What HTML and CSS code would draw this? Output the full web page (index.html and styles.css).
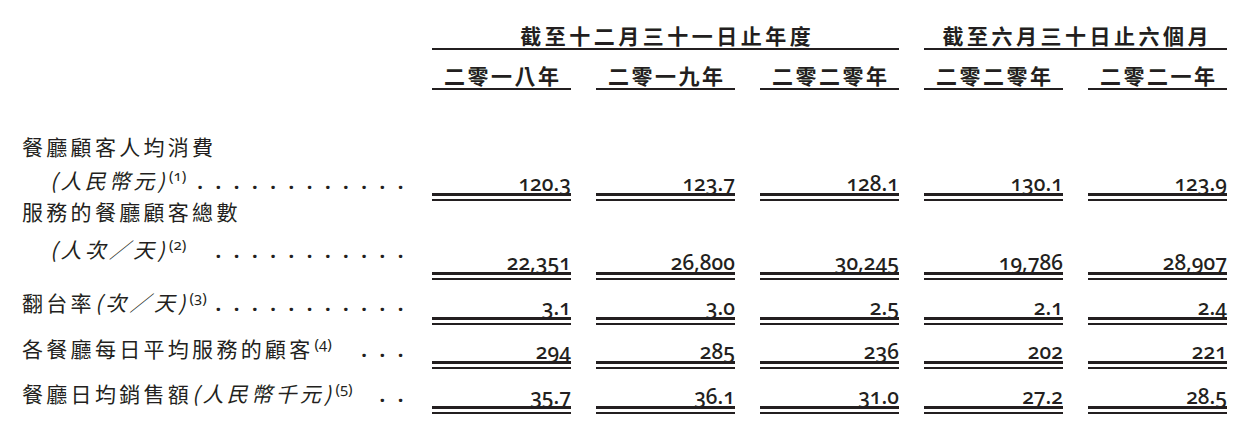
FILE: index.html
```html
<!DOCTYPE html>
<html lang="zh-Hant">
<head>
<meta charset="utf-8">
<title>營運數據</title>
<link rel="stylesheet" href="styles.css">
</head>
<body>
<div class="table">
  <div class="corner"></div>
  <div class="group g1">截至十二月三十一日止年度</div>
  <div class="group g2">截至六月三十日止六個月</div>

  <div class="corner"></div>
  <div class="year">二零一八年</div>
  <div class="year">二零一九年</div>
  <div class="year">二零二零年</div>
  <div class="year">二零二零年</div>
  <div class="year">二零二一年</div>

  <div class="label r1">
    <div class="line">餐廳顧客人均消費</div>
    <div class="line lead"><span class="sub indent"><i>(人民幣元)</i><sup>(1)</sup></span><span class="dots">............</span></div>
  </div>
  <div class="num"><span>120.3</span></div>
  <div class="num"><span>123.7</span></div>
  <div class="num"><span>128.1</span></div>
  <div class="num"><span>130.1</span></div>
  <div class="num"><span>123.9</span></div>

  <div class="label r2">
    <div class="line">服務的餐廳顧客總數</div>
    <div class="line lead"><span class="sub indent"><i>(人次／天)</i><sup>(2)</sup></span><span class="dots">...........</span></div>
  </div>
  <div class="num"><span>22,351</span></div>
  <div class="num"><span>26,800</span></div>
  <div class="num"><span>30,245</span></div>
  <div class="num"><span>19,786</span></div>
  <div class="num"><span>28,907</span></div>

  <div class="label r3">
    <div class="line lead"><span class="sub">翻台率<i>(次／天)</i><sup>(3)</sup></span><span class="dots">...........</span></div>
  </div>
  <div class="num"><span>3.1</span></div>
  <div class="num"><span>3.0</span></div>
  <div class="num"><span>2.5</span></div>
  <div class="num"><span>2.1</span></div>
  <div class="num"><span>2.4</span></div>

  <div class="label r4">
    <div class="line lead"><span class="sub">各餐廳每日平均服務的顧客<sup>(4)</sup></span><span class="dots">...</span></div>
  </div>
  <div class="num"><span>294</span></div>
  <div class="num"><span>285</span></div>
  <div class="num"><span>236</span></div>
  <div class="num"><span>202</span></div>
  <div class="num"><span>221</span></div>

  <div class="label r5">
    <div class="line lead"><span class="sub">餐廳日均銷售額<i>(人民幣千元)</i><sup>(5)</sup></span><span class="dots">..</span></div>
  </div>
  <div class="num"><span>35.7</span></div>
  <div class="num"><span>36.1</span></div>
  <div class="num"><span>31.0</span></div>
  <div class="num"><span>27.2</span></div>
  <div class="num"><span>28.5</span></div>
</div>
</body>
</html>
```

FILE: styles.css
```css
html, body {
  margin: 0;
  padding: 0;
  background: #ffffff;
}

body {
  color: #231f20;
  font-family: "Noto Sans CJK TC", "Noto Sans", sans-serif;
  width: 1248px;
  height: 432px;
  overflow: hidden;
}

.table {
  display: grid;
  grid-template-columns: 407px repeat(5, 139px);
  grid-template-rows: 50px 40px 111px 79px 45px 44px 45px;
  column-gap: 25px;
}

.group {
  align-self: end;
  font-size: 21px;
  font-weight: 700;
  line-height: 24px;
  letter-spacing: 3.5px;
  padding-left: 3.5px;
  text-align: center;
  padding-bottom: 1px;
  border-bottom: 2px solid #231f20;
}

.g1 { grid-column: 2 / span 3; }
.g2 { grid-column: 5 / span 2; }

.year {
  align-self: end;
  font-size: 21px;
  font-weight: 700;
  line-height: 24px;
  letter-spacing: 2.5px;
  padding-left: 2.5px;
  text-align: center;
  padding-bottom: 1px;
  border-bottom: 2px solid #231f20;
}

.label {
  align-self: end;
  font-size: 21px;
  line-height: 35px;
  letter-spacing: 3.3px;
  padding-left: 22px;
  padding-bottom: 2px;
}

.label.r1 .line:first-child { margin-bottom: -1px; }
.label.r2 { padding-bottom: 12px; }
.label.r2 .line:first-child { margin-bottom: 3px; }
.label.r3 { padding-bottom: 4px; }

.lead {
  display: flex;
  justify-content: space-between;
  align-items: baseline;
  white-space: nowrap;
}

.indent { padding-left: 28px; }

.sub i {
  font-style: italic;
}

.sub sup {
  font-family: "Noto Sans", sans-serif;
  font-feature-settings: "onum" 1;
  font-size: 15px;
  line-height: 0;
  letter-spacing: 0;
  vertical-align: 8px;
  margin-left: 1px;
}

.dots {
  font-family: "Noto Sans", sans-serif;
  font-weight: 700;
  font-size: 20px;
  letter-spacing: 12.6px;
  margin-right: -9px;
}

.num {
  align-self: end;
  padding-bottom: 3px;
  border-bottom: 2px solid #231f20;
}

.num span {
  display: block;
  text-align: right;
  font-family: "Noto Sans", sans-serif;
  font-size: 21px;
  font-weight: 500;
  line-height: 20px;
  font-feature-settings: "onum" 1;
  font-variant-numeric: oldstyle-nums;
  border-bottom: 3px solid #231f20;
}
```
